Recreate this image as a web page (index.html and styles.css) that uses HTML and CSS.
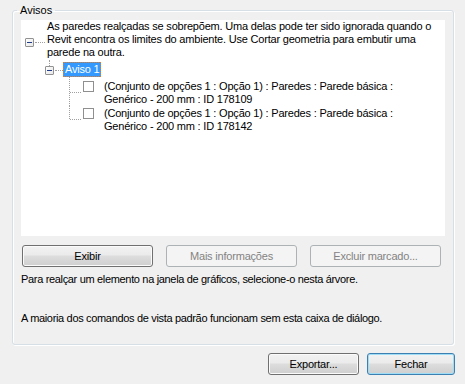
FILE: index.html
```html
<!DOCTYPE html>
<html lang="pt">
<head>
<meta charset="utf-8">
<title>Avisos</title>
<link rel="stylesheet" href="styles.css">
</head>
<body>
<div class="dialog">
  <fieldset class="group">
    <legend class="group-title">Avisos</legend>
    <div class="tree">
      <div class="row root">
        <div class="gutter g-root">
          <span class="exp"></span>
          <span class="hline"></span>
        </div>
        <div class="label">As paredes realçadas se sobrepõem. Uma delas pode ter sido ignorada quando o<br>Revit encontra os limites do ambiente. Use Cortar geometria para embutir uma<br>parede na outra.</div>
      </div>
      <div class="row child">
        <div class="gutter g-child">
          <span class="vtop"></span>
          <span class="exp"></span>
          <span class="hline"></span>
        </div>
        <div class="label selected">Aviso 1</div>
      </div>
      <div class="row leaf first">
        <div class="gutter g-leaf">
          <span class="vline"></span>
          <span class="hline"></span>
          <span class="check"></span>
        </div>
        <div class="label">(Conjunto de opções 1 : Opção 1) : Paredes : Parede básica :<br>Genérico - 200 mm : ID 178109</div>
      </div>
      <div class="row leaf last">
        <div class="gutter g-leaf">
          <span class="vline"></span>
          <span class="hline"></span>
          <span class="check"></span>
        </div>
        <div class="label">(Conjunto de opções 1 : Opção 1) : Paredes : Parede básica :<br>Genérico - 200 mm : ID 178142</div>
      </div>
    </div>
    <div class="actions">
      <button class="btn">Exibir</button>
      <button class="btn" disabled>Mais informações</button>
      <button class="btn" disabled>Excluir marcado...</button>
    </div>
    <p class="hint">Para realçar um elemento na janela de gráficos, selecione-o nesta árvore.</p>
    <p class="hint second">A maioria dos comandos de vista padrão funcionam sem esta caixa de diálogo.</p>
  </fieldset>
  <div class="footer">
    <button class="btn export">Exportar...</button>
    <button class="btn close default">Fechar</button>
  </div>
</div>
</body>
</html>
```

FILE: styles.css
```css
* { box-sizing: border-box; }
html, body {
  margin: 0;
  padding: 0;
  background: #f0f0f0;
}
body {
  font-family: "Liberation Sans", Arial, sans-serif;
  font-size: 11px;
  line-height: 13px;
  color: #000;
}
.dialog {
  width: 465px;
  height: 384px;
  padding: 4px 0 0 12px;
}
.group {
  margin: 0;
  width: 442px;
  height: 341px;
  padding: 3px 8px 0 8px;
  border: 1px solid #d5dfe5;
  border-radius: 3px;
  box-shadow: 1px 1px 0 #fff, inset 1px 1px 0 #fff;
}
.group-title {
  padding: 0 3px;
  margin-left: -4px;
  line-height: 13px;
}
.tree {
  background: #fff;
  height: 216px;
  letter-spacing: -0.2px;
}
.row {
  display: flex;
  align-items: flex-start;
}
.label {
  white-space: nowrap;
}
.gutter {
  position: relative;
  flex: none;
}
.exp {
  position: absolute;
  width: 9px;
  height: 9px;
  border: 1px solid #919191;
  background: linear-gradient(135deg, #fff 0%, #e6e6e6 100%);
  border-radius: 1px;
}
.exp::after {
  content: "";
  position: absolute;
  left: 1px;
  top: 3px;
  width: 5px;
  height: 1px;
  background: #1e3b8c;
}
.hline {
  position: absolute;
  height: 0;
  border-top: 1px dotted #a0a0a0;
}
.vline, .vtop {
  position: absolute;
  width: 0;
  border-left: 1px dotted #a0a0a0;
}
/* root */
.g-root { width: 26px; height: 39px; }
.g-root .exp { left: 4px; top: 18px; }
.g-root .hline { left: 14px; width: 10px; top: 22px; }
/* child */
.row.child { height: 20px; padding-left: 20px; }
.g-child { width: 22px; height: 20px; }
.g-child .vtop { left: 8px; top: 1px; height: 6px; }
.g-child .exp { left: 4px; top: 7px; }
.g-child .hline { left: 14px; width: 8px; top: 11px; }
.label.selected {
  margin-top: 3px;
  height: 15px;
  padding: 1px 2px 0 2px;
  background: #3399ff;
  color: #fff;
  outline: 1px dotted #e87b22;
  outline-offset: -1px;
}
/* leaves */
.row.leaf { height: 27px; padding-left: 40px; }
.g-leaf { width: 43px; height: 27px; }
.g-leaf .vline { left: 8px; top: 0; height: 27px; }
.row.leaf.first .vline { top: -2px; height: 29px; }
.row.leaf.last .vline { height: 13px; }
.g-leaf .hline { left: 9px; width: 11px; top: 13px; }
.g-leaf .check {
  position: absolute;
  left: 22px;
  top: 2px;
  width: 11px;
  height: 11px;
  border: 1px solid #8f8f8f;
  background: #fff;
}
.row.leaf .label { padding-top: 1px; }
/* buttons */
.actions {
  display: flex;
  gap: 13px;
  margin-top: 9px;
  padding-left: 1px;
}
.btn {
  font-family: inherit;
  font-size: 11px;
  font-weight: normal;
  letter-spacing: -0.2px;
  line-height: 13px;
  width: 131px;
  height: 22px;
  padding: 0;
  border: 1px solid #707070;
  border-radius: 3px;
  color: #000;
  background: linear-gradient(#f2f2f2 0%, #ebebeb 45%, #dddddd 50%, #cfcfcf 100%);
  box-shadow: inset 0 0 0 1px #fbfbfb;
}
.btn:disabled {
  border-color: #adb2b5;
  background: #f4f4f4;
  color: #838383;
  box-shadow: none;
}
.hint {
  margin: 6px 0 0 0;
  white-space: nowrap;
  letter-spacing: -0.33px;
}
.hint.second {
  margin-top: 26px;
}
.footer {
  display: flex;
  justify-content: flex-end;
  gap: 8px;
  margin-top: 8px;
  padding-right: 10px;
}
.btn.export { width: 91px; }
.btn.close { width: 88px; }
.btn.default {
  border-color: #3c7fb1;
  box-shadow: inset 0 0 0 1px #9fdcf5;
}
```
